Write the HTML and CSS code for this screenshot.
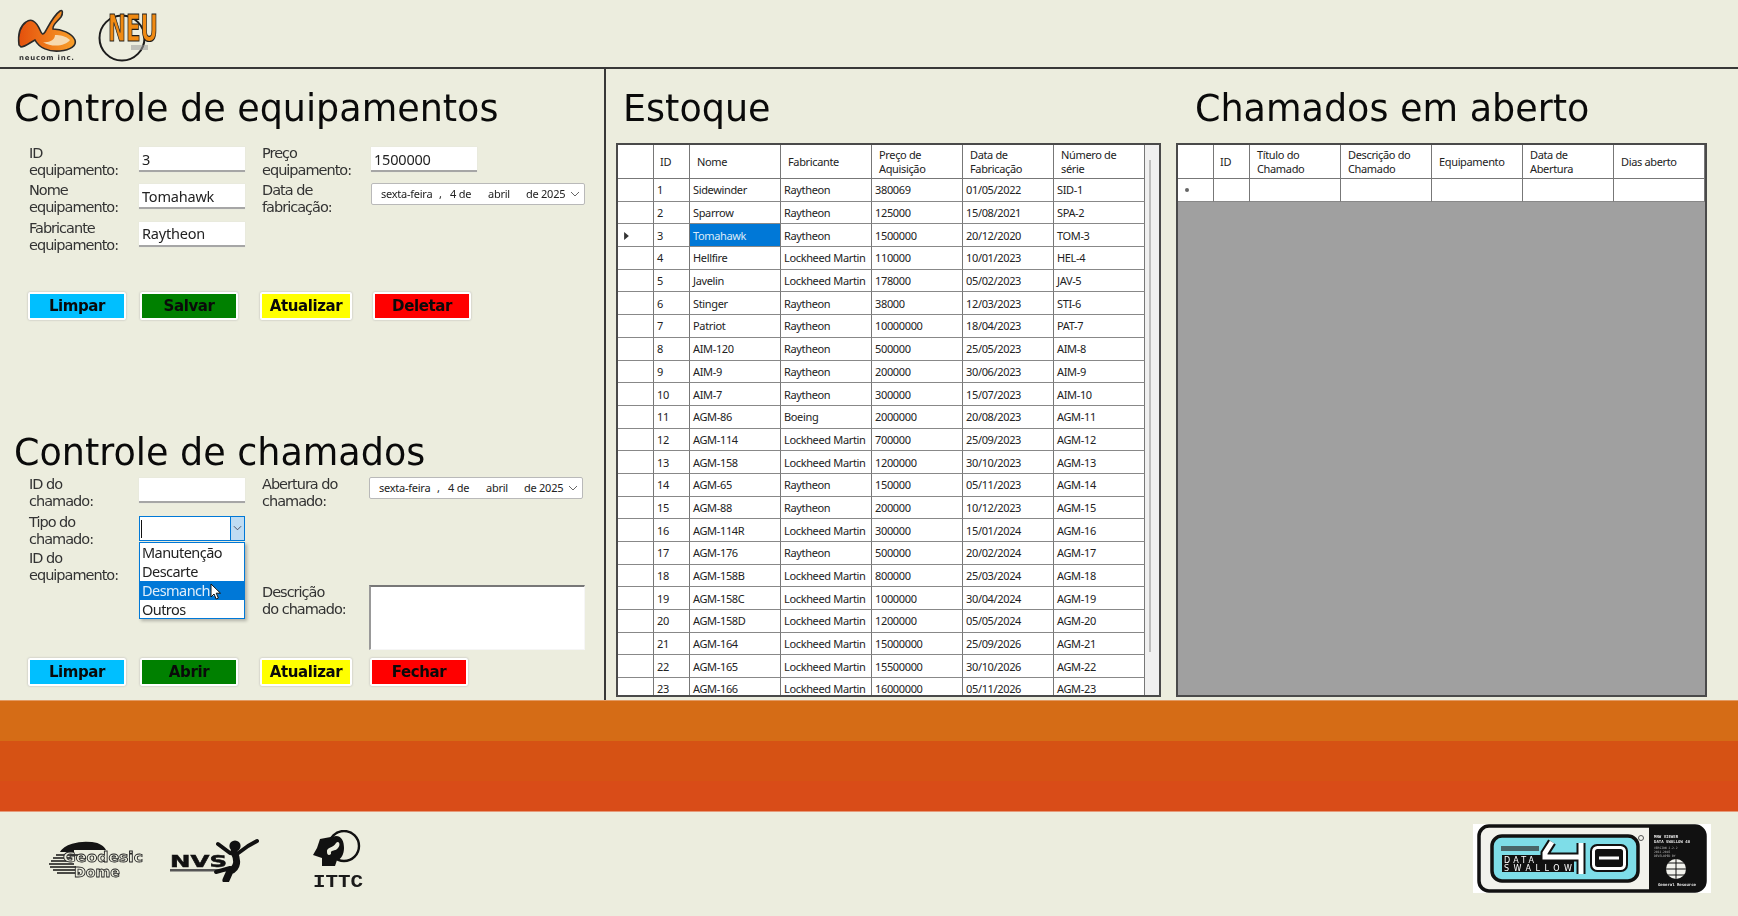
FILE: index.html
```html
<!DOCTYPE html>
<html lang="pt-BR">
<head>
<meta charset="utf-8">
<title>Controle de equipamentos</title>
<link rel="stylesheet" href="styles.css">
</head>
<body>
<header class="topbar">
  <svg class="logo-neucom" viewBox="0 0 64 54" width="64" height="54" aria-label="Neucom Inc.">
    <defs><linearGradient id="ng" x1="0" x2="1" y1="0" y2="0"><stop offset="0" stop-color="#e4500c"/><stop offset="1" stop-color="#f9a02a"/></linearGradient></defs>
    <path d="M3 38C2 30 3 20 10 15C15 11 20 14 24 23C26 28 27 28 29 25C33 18 38 8 44 4C47 2 47 7 45 10C41 15 36 18 37 22C45 22 56 26 59 33C61 39 54 43 44 44C33 45 23 41 19 33C15 35 9 40 5 40Z" fill="url(#ng)" stroke="#2a2a2a" stroke-width="1.6"/>
    <path d="M27 35C36 41 50 39 54 33C50 29 44 28 39 28C39 33 33 36 27 35Z" fill="#f6d9b0"/>
    <text x="3" y="52.5" class="neucom-text" textLength="55">neucom inc.</text>
  </svg>
  <svg class="logo-neu" viewBox="0 0 62 60" width="62" height="60" aria-label="NEU">
    <circle cx="24" cy="30" r="22.5" fill="none" stroke="#1c1c1c" stroke-width="2"/>
    <text x="10" y="33" class="neu-text" textLength="50" lengthAdjust="spacingAndGlyphs">NEU</text>
    <rect x="33" y="37" width="17" height="5" fill="#9a9a9a" opacity=".55"/>
  </svg>
</header>

<main class="workspace">
  <div class="left-panel">
    <section class="equip">
      <h1 class="title">Controle de equipamentos</h1>
      <div class="form">
        <label class="lbl">ID<br>equipamento:</label>
        <input class="field" value="3">
        <label class="lbl">Preço<br>equipamento:</label>
        <input class="field" value="1500000">
        <label class="lbl">Nome<br>equipamento:</label>
        <input class="field" value="Tomahawk">
        <label class="lbl">Data de<br>fabricação:</label>
        <div class="date"><span class="d-wd">sexta-feira</span><span class="d-c">,</span><span class="d-day">4 de</span><span class="d-mo">abril</span><span class="d-yr">de 2025</span><svg class="chev" viewBox="0 0 10 6" width="10" height="6"><path d="M1 1l4 4 4-4" fill="none" stroke="#666" stroke-width="1"/></svg></div>
        <label class="lbl">Fabricante<br>equipamento:</label>
        <input class="field" value="Raytheon">
      </div>
      <div class="btns btns-equip">
        <button class="btn blue">Limpar</button>
        <button class="btn green">Salvar</button>
        <button class="btn yellow">Atualizar</button>
        <button class="btn red">Deletar</button>
      </div>
    </section>

    <section class="chamados">
      <h1 class="title">Controle de chamados</h1>
      <div class="form form-ch">
        <label class="lbl">ID do<br>chamado:</label>
        <input class="field">
        <label class="lbl">Abertura do<br>chamado:</label>
        <div class="date"><span class="d-wd">sexta-feira</span><span class="d-c">,</span><span class="d-day">4 de</span><span class="d-mo">abril</span><span class="d-yr">de 2025</span><svg class="chev" viewBox="0 0 10 6" width="10" height="6"><path d="M1 1l4 4 4-4" fill="none" stroke="#666" stroke-width="1"/></svg></div>
        <label class="lbl">Tipo do<br>chamado:</label>
        <div class="combo">
          <span class="combo-text"><i class="caret"></i></span>
          <span class="combo-arrow"><svg viewBox="0 0 10 6" width="9" height="6"><path d="M1 1l4 4 4-4" fill="none" stroke="#445" stroke-width="1"/></svg></span>
          <ul class="dropdown">
            <li>Manutenção</li>
            <li>Descarte</li>
            <li class="sel">Desmanche</li>
            <li>Outros</li>
          </ul>
          <svg class="cursor" viewBox="0 0 12 18" width="12" height="18"><path d="M1 1v13l3-3 2.2 5 2.2-1-2.2-4.8h4.3z" fill="#fff" stroke="#111" stroke-width="1"/></svg>
        </div>
        <span class="gap2"></span>
        <span class="gap2"></span>
        <label class="lbl">ID do<br>equipamento:</label>
        <input class="field">
        <span class="gap2"></span>
        <span class="gap2"></span>
        <span class="gap2"></span>
        <span class="gap2"></span>
        <label class="lbl">Descrição<br>do chamado:</label>
        <textarea class="memo"></textarea>
      </div>
      <div class="btns">
        <button class="btn blue">Limpar</button>
        <button class="btn green">Abrir</button>
        <button class="btn yellow">Atualizar</button>
        <button class="btn red fechar">Fechar</button>
      </div>
    </section>
  </div>

  <div class="stock">
    <h1 class="title title-stock">Estoque</h1>
    <div class="grid-frame stock-frame">
      <table class="dg">
        <colgroup><col class="c-h"><col class="c-id"><col class="c-n"><col class="c-n"><col class="c-n"><col class="c-n"><col class="c-n"></colgroup>
        <thead><tr><th></th><th class="ctr">ID</th><th>Nome</th><th>Fabricante</th><th>Preço de<br>Aquisição</th><th>Data de<br>Fabricação</th><th>Número de<br>série</th></tr></thead>
        <tbody>
          <tr><td></td><td>1</td><td>Sidewinder</td><td>Raytheon</td><td>380069</td><td>01/05/2022</td><td>SID-1</td></tr>
          <tr><td></td><td>2</td><td>Sparrow</td><td>Raytheon</td><td>125000</td><td>15/08/2021</td><td>SPA-2</td></tr>
          <tr><td class="mark"><svg viewBox="0 0 6 10" width="5" height="8"><path d="M0 0l6 5-6 5z" fill="#333"/></svg></td><td>3</td><td class="picked">Tomahawk</td><td>Raytheon</td><td>1500000</td><td>20/12/2020</td><td>TOM-3</td></tr>
          <tr><td></td><td>4</td><td>Hellfire</td><td>Lockheed Martin</td><td>110000</td><td>10/01/2023</td><td>HEL-4</td></tr>
          <tr><td></td><td>5</td><td>Javelin</td><td>Lockheed Martin</td><td>178000</td><td>05/02/2023</td><td>JAV-5</td></tr>
          <tr><td></td><td>6</td><td>Stinger</td><td>Raytheon</td><td>38000</td><td>12/03/2023</td><td>STI-6</td></tr>
          <tr><td></td><td>7</td><td>Patriot</td><td>Raytheon</td><td>10000000</td><td>18/04/2023</td><td>PAT-7</td></tr>
          <tr><td></td><td>8</td><td>AIM-120</td><td>Raytheon</td><td>500000</td><td>25/05/2023</td><td>AIM-8</td></tr>
          <tr><td></td><td>9</td><td>AIM-9</td><td>Raytheon</td><td>200000</td><td>30/06/2023</td><td>AIM-9</td></tr>
          <tr><td></td><td>10</td><td>AIM-7</td><td>Raytheon</td><td>300000</td><td>15/07/2023</td><td>AIM-10</td></tr>
          <tr><td></td><td>11</td><td>AGM-86</td><td>Boeing</td><td>2000000</td><td>20/08/2023</td><td>AGM-11</td></tr>
          <tr><td></td><td>12</td><td>AGM-114</td><td>Lockheed Martin</td><td>700000</td><td>25/09/2023</td><td>AGM-12</td></tr>
          <tr><td></td><td>13</td><td>AGM-158</td><td>Lockheed Martin</td><td>1200000</td><td>30/10/2023</td><td>AGM-13</td></tr>
          <tr><td></td><td>14</td><td>AGM-65</td><td>Raytheon</td><td>150000</td><td>05/11/2023</td><td>AGM-14</td></tr>
          <tr><td></td><td>15</td><td>AGM-88</td><td>Raytheon</td><td>200000</td><td>10/12/2023</td><td>AGM-15</td></tr>
          <tr><td></td><td>16</td><td>AGM-114R</td><td>Lockheed Martin</td><td>300000</td><td>15/01/2024</td><td>AGM-16</td></tr>
          <tr><td></td><td>17</td><td>AGM-176</td><td>Raytheon</td><td>500000</td><td>20/02/2024</td><td>AGM-17</td></tr>
          <tr><td></td><td>18</td><td>AGM-158B</td><td>Lockheed Martin</td><td>800000</td><td>25/03/2024</td><td>AGM-18</td></tr>
          <tr><td></td><td>19</td><td>AGM-158C</td><td>Lockheed Martin</td><td>1000000</td><td>30/04/2024</td><td>AGM-19</td></tr>
          <tr><td></td><td>20</td><td>AGM-158D</td><td>Lockheed Martin</td><td>1200000</td><td>05/05/2024</td><td>AGM-20</td></tr>
          <tr><td></td><td>21</td><td>AGM-164</td><td>Lockheed Martin</td><td>15000000</td><td>25/09/2026</td><td>AGM-21</td></tr>
          <tr><td></td><td>22</td><td>AGM-165</td><td>Lockheed Martin</td><td>15500000</td><td>30/10/2026</td><td>AGM-22</td></tr>
          <tr><td></td><td>23</td><td>AGM-166</td><td>Lockheed Martin</td><td>16000000</td><td>05/11/2026</td><td>AGM-23</td></tr>
        </tbody>
      </table>
      <div class="scroll"><span class="thumb"></span></div>
    </div>
  </div>

  <div class="tickets">
    <h1 class="title title-tickets">Chamados em aberto</h1>
    <div class="grid-frame tickets-frame">
      <table class="dg dg2">
        <colgroup><col class="c-h"><col class="c-id"><col class="c-n"><col class="c-n"><col class="c-n"><col class="c-n"><col class="c-n"></colgroup>
        <thead><tr><th></th><th class="ctr">ID</th><th>Título do<br>Chamado</th><th>Descrição do<br>Chamado</th><th>Equipamento</th><th>Data de<br>Abertura</th><th>Dias aberto</th></tr></thead>
        <tbody><tr><td class="star"><span class="dot"></span></td><td></td><td></td><td></td><td></td><td></td><td></td></tr></tbody>
      </table>
    </div>
  </div>
</main>

<div class="bands"><div class="b1"></div><div class="b2"></div><div class="b3"></div></div>

<footer class="footer">
  <div class="partners">
    <svg class="logo-geo" viewBox="0 0 100 44" width="100" height="44" aria-label="Geodesic Dome">
      <path d="M13 14A27 14 0 0 1 45 4C53 5 57 8 59 12H27V14Z" fill="#141414"/>
      <g stroke="#141414" stroke-width="1.5"><path d="M9 17H31M6 20H27M4 23H25M2 26H27M3 29H29M6 32H31M10 35H33"/></g>
      <text x="16" y="24" class="geo-text" textLength="80" lengthAdjust="spacingAndGlyphs">Geodesic</text>
      <text x="27" y="39" class="geo-text" textLength="46" lengthAdjust="spacingAndGlyphs">Dome</text>
    </svg>
    <svg class="logo-nvs" viewBox="0 0 92 44" width="92" height="44" aria-label="NVS">
      <text x="0" y="29" class="nvs-text" textLength="57" lengthAdjust="spacingAndGlyphs">NVS</text>
      <rect x="0" y="31" width="56" height="2.5" fill="#555"/>
      <circle cx="65" cy="8" r="5.6" fill="#111"/>
      <path d="M48 6L60 15L67 16L78 8L87 3" fill="none" stroke="#111" stroke-width="4" stroke-linecap="round" stroke-linejoin="round"/>
      <path d="M64 14C68 22 68 30 60 33L56 42" fill="none" stroke="#111" stroke-width="7" stroke-linecap="round"/>
      <path d="M60 30L46 34" fill="none" stroke="#111" stroke-width="4" stroke-linecap="round"/>
    </svg>
    <svg class="logo-ittc" viewBox="0 0 54 68" width="54" height="68" aria-label="ITTC">
      <circle cx="32" cy="16" r="15" fill="none" stroke="#111" stroke-width="2.4"/>
      <path d="M8 9L24 6C30 6 32 12 32 18C32 24 29 30 25 30L23 36H10L10 28L1 25L5 18Z" fill="#111"/>
      <path d="M15 22C14 17 22 18 24 13C27 10 29 15 26 18C23 22 18 19 19 24C17 26 15 25 15 22Z" fill="#ecedde"/>
      <text x="26" y="57" class="ittc-text" text-anchor="middle" textLength="50" lengthAdjust="spacingAndGlyphs">ITTC</text>
    </svg>
  </div>
  <svg class="logo-data" viewBox="0 0 238 69" width="238" height="69" aria-label="Data Swallow 40">
    <rect width="238" height="69" fill="#fff"/>
    <rect x="6" y="2" width="226" height="65" rx="10" fill="#f2f2ec" stroke="#111" stroke-width="3.5"/>
    <path d="M176 2H222A10 10 0 0 1 232 12V57A10 10 0 0 1 222 67H176Z" fill="#111"/>
    <rect x="19" y="12" width="146" height="45" rx="10" fill="#7edde8" stroke="#111" stroke-width="3.5"/>
    <rect x="29" y="31" width="72" height="17" fill="#111"/>
    <rect x="28" y="22" width="38" height="5" fill="#333" opacity=".7"/>
    <text x="31" y="39" class="ds-text" textLength="30">DATA</text>
    <text x="31" y="47" class="ds-text" textLength="68">SWALLOW</text>
    <path d="M79 18L72 29V33H108M108 19V50" fill="none" stroke="#111" stroke-width="9"/>
    <path d="M79 18L72 29V33H108M108 19V50" fill="none" stroke="#fff" stroke-width="5"/>
    <rect x="117" y="20" width="38" height="28" rx="7" fill="#111"/>
    <rect x="120.500" y="23.500" width="31" height="21" rx="4" fill="#111" stroke="#fff" stroke-width="3"/>
    <rect x="126" y="32.500" width="20" height="3" fill="#fff"/>
    <circle cx="168" cy="14" r="2.500" fill="none" stroke="#555"/>
    <text x="181" y="14" class="ds-small">MNW VIEWER</text>
    <text x="181" y="19" class="ds-small">DATA SWALLOW 40</text>
    <text x="181" y="25" class="ds-micro">VERSION 2.2.2</text>
    <text x="181" y="29" class="ds-micro">2032.2045</text>
    <text x="181" y="33" class="ds-micro">DEVELOPED BY</text>
    <circle cx="203" cy="45" r="10" fill="#f2f2ec"/>
    <path d="M193 45H213M203 35V55M195 39H211M195 51H211" stroke="#111" stroke-width="1"/>
    <text x="185" y="61.500" class="ds-small" textLength="38">General Resource</text>
  </svg>
</footer>
</body>
</html>
```

FILE: styles.css
```css
* { box-sizing: border-box; }
html, body { margin: 0; padding: 0; }
body {
  width: 1738px;
  height: 916px;
  overflow: hidden;
  background: #ecedde;
  display: flex;
  flex-direction: column;
  color: #111;
  font-family: "Noto Sans", sans-serif;
}
.topbar, .workspace, .footer { filter: blur(.3px); }

/* top bar */
.topbar {
  height: 69px;
  flex: none;
  border-bottom: 2px solid #383838;
  display: flex;
  align-items: flex-start;
  padding: 7px 0 0 16px;
  gap: 18px;
}
.topbar svg { display: block; }
.neucom-text { font: 700 7px "DejaVu Sans", sans-serif; fill: #333; }
.neu-text {
  font: 700 38px "DejaVu Sans", sans-serif;
  fill: #f08a12;
  stroke: #1c1c1c;
  stroke-width: 1.2;
}
.logo-neu { margin-top: 1px; }

/* workspace */
.workspace {
  height: 631px;
  flex: none;
  display: flex;
}
.left-panel {
  width: 606px;
  flex: none;
  border-right: 2px solid #383838;
  padding-left: 14px;
}
.title {
  margin: 0;
  font: 400 36.5px/50px "DejaVu Sans", sans-serif;
  color: #0a0a0a;
  white-space: nowrap;
}
.equip { padding-top: 15px; }
.equip .title { margin-bottom: 12px; }
.chamados { margin-top: 108px; }
.chamados .title { margin-bottom: -1px; }

/* forms */
.form {
  margin-left: 15px;
  display: grid;
  grid-template-columns: 110px 106px 126px 109px;
  grid-auto-rows: 37.3px;
  align-items: start;
}
.form-ch {
  grid-template-columns: 110px 106px 124px 216px;
  grid-template-rows: 38px 36px 34px 73px;
}
.lbl {
  font: 400 14.5px/17px "DejaVu Sans", sans-serif;
  letter-spacing: -1px;
  color: #333;
  white-space: nowrap;
  margin-top: -1px;
}
.form .lbl:nth-child(3), .form .lbl:nth-child(7) { padding-left: 17px; }
.form-ch .lbl:last-of-type { padding-left: 17px; grid-column: 3; }
.field {
  width: 106px;
  height: 25px;
  margin-top: 1px;
  border: 0;
  border-bottom: 2px solid #a6a6a6;
  background: #fff;
  padding: 0 3px;
  font: 400 14.5px/23px "Noto Sans", sans-serif;
  letter-spacing: -0.2px;
  color: #222;
  outline: none;
  box-shadow: 0 0 1px #ddd;
}
.date {
  width: 214px;
  height: 22px;
  border: 1px solid #b9b9b9;
  border-radius: 2px;
  background: #fff;
  position: relative;
  font: 400 11px/20px "Noto Sans", sans-serif;
  letter-spacing: -0.25px;
  color: #222;
  display: flex;
}
.d-wd { margin-left: 9px; width: 58px; }
.d-c { width: 11px; }
.d-day { width: 38px; }
.d-mo { width: 38px; }
.d-yr { width: 46px; }
.chev { position: absolute; right: 4px; top: 7px; }

.combo {
  width: 106px;
  height: 25px;
  margin-top: 1px;
  border: 1px solid #0078d7;
  background: #fff;
  position: relative;
  display: flex;
}
.combo-text { flex: 1; position: relative; }
.caret { position: absolute; left: 1px; top: 3px; width: 1px; height: 18px; background: #111; }
.combo-arrow {
  width: 14px;
  border-left: 1px solid #0078d7;
  background: #bfdcf3;
  display: flex;
  align-items: center;
  justify-content: center;
}
.dropdown {
  position: absolute;
  z-index: 5;
  left: -1px;
  top: 25px;
  width: 106px;
  height: 77px;
  margin: 0;
  padding: 0;
  list-style: none;
  background: #fff;
  border: 1px solid #0078d7;
  box-shadow: 2px 2px 3px rgba(0,0,0,.25);
  font: 400 14.5px/19px "Noto Sans", sans-serif;
  letter-spacing: -0.55px;
  color: #222;
}
.dropdown li { height: 19px; padding-left: 2px; overflow: hidden; white-space: nowrap; }
.dropdown .sel { background: #0078d7; color: #dfeefa; }
.cursor { position: absolute; z-index: 6; left: 70px; top: 66px; }
.memo {
  width: 216px;
  height: 65px;
  border: 1px solid #f6f6f6;
  border-top: 2px solid #777;
  border-left: 2px solid #999;
  background: #fff;
  resize: none;
  display: block;
}

/* buttons */
.btns { display: flex; margin-left: 14px; }
.btns-equip { margin-top: 34px; }
.btn {
  width: 98px;
  height: 28px;
  padding: 0;
  border: 2px solid #fff;
  border-radius: 2px;
  box-shadow: 0 0 2px #aaa;
  font: 700 15px/24px "DejaVu Sans", sans-serif;
  letter-spacing: -0.4px;
  color: #0a0a0a;
}
.btn + .btn { margin-left: 14px; }
.blue { background: #00bfff; }
.green { background: #008000; }
.yellow { background: #ffff00; width: 92px; margin-left: 22px !important; }
.red { background: #ff0000; margin-left: 21px !important; }
.red.fechar { margin-left: 18px !important; }

/* right side */
.stock { width: 570px; flex: none; padding: 15px 0 0 10px; }
.tickets { width: 531px; flex: none; padding-top: 15px; }
.title-stock { padding-left: 7px; margin-bottom: 9px; }
.title-tickets { padding-left: 19px; margin-bottom: 9px; }
.grid-frame {
  height: 554px;
  border: 2px solid #4a4a4a;
  overflow: hidden;
  position: relative;
}
.stock-frame { width: 545px; background: #f0f0f0; }
.tickets-frame { width: 531px; background: #a0a0a0; }
.dg {
  table-layout: fixed;
  border-collapse: separate;
  border-spacing: 0;
  width: 527px;
  font: 400 11px/14px "Noto Sans", sans-serif;
  letter-spacing: -0.35px;
  color: #222;
  background: #fff;
}
.c-h { width: 36px; }
.c-id { width: 36px; }
.c-n { width: 91px; }
.dg th {
  height: 34px;
  padding: 0 0 0 7px;
  font-weight: 400;
  text-align: left;
  border-right: 1px solid #777;
  border-bottom: 1px solid #777;
  white-space: nowrap;
}
.dg th.ctr { padding-left: 6px; }
.dg td {
  height: 22.7px;
  padding: 1px 0 0 3px;
  border-right: 1px solid #777;
  border-bottom: 1px solid #888;
  white-space: nowrap;
  overflow: hidden;
}
.dg td.picked { background: #0078d7; color: #dcebf8; }
.dg td.mark { padding-left: 6px; line-height: 0; }
.dg td.star { padding-left: 7px; line-height: 0; }
.dot { display: inline-block; width: 4px; height: 4px; border-radius: 50%; background: #666; }
.scroll {
  position: absolute;
  right: 0;
  top: 0;
  bottom: 0;
  width: 16px;
}
.thumb {
  position: absolute;
  left: 6px;
  top: 15px;
  width: 2px;
  height: 492px;
  background: #bdbdbd;
}

/* bands */
.bands { flex: none; }
.b1 { height: 41px; background: #d56c16; border-top: 1px solid #e39a63; }
.b2 { height: 40px; background: #d65214; }
.b3 { height: 31px; background: #d94c18; border-bottom: 1px solid #e69a7a; }

/* footer */
.footer {
  flex: 1;
  display: flex;
  justify-content: space-between;
  align-items: flex-start;
  padding: 12px 27px 0 47px;
}
.partners { display: flex; align-items: flex-start; }
.logo-geo { margin-top: 14px; }
.logo-nvs { margin: 14px 0 0 23px; }
.logo-ittc { margin: 6px 0 0 50px; }
.geo-text {
  font: 700 14px "DejaVu Sans", sans-serif;
  fill: #ecedde;
  stroke: #222;
  stroke-width: .8;
}
.nvs-text { font: 900 15px "DejaVu Sans", sans-serif; fill: #111; stroke: #111; stroke-width: .5; }
.ittc-text { font: 700 17.5px "Liberation Mono", monospace; fill: #1a1a1a; }
.ds-text { font: 400 8px "DejaVu Sans", sans-serif; fill: #fff; }
.ds-small { font: 700 4px "DejaVu Sans Mono", monospace; fill: #e6e6e6; }
.ds-micro { font: 400 3px "DejaVu Sans Mono", monospace; fill: #bbb; }
```
